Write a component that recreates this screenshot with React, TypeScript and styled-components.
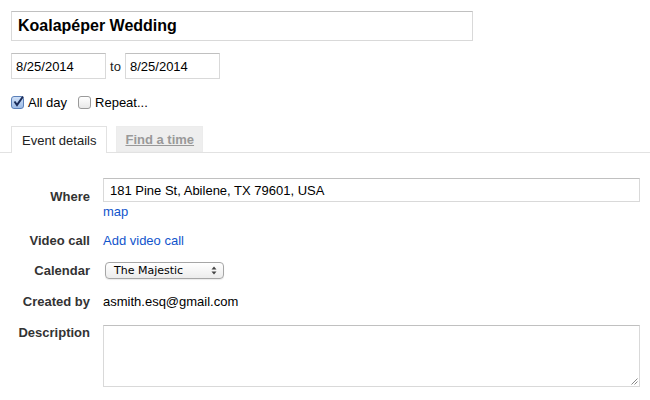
import React from "react";
import styled, { createGlobalStyle } from "styled-components";

const Global = createGlobalStyle`
  html, body { margin: 0; padding: 0; background: #fff; }
  body { font-family: "Liberation Sans", Arial, sans-serif; font-size: 13px; color: #222; }
  * { box-sizing: border-box; }
`;

const Page = styled.div`
  width: 650px;
  height: 400px;
  overflow: hidden;
  padding-top: 11px;
`;

const Top = styled.div`
  padding-left: 11px;
  display: flex;
  flex-direction: column;
`;

const TitleInput = styled.input`
  width: 462px;
  height: 30px;
  border: 1px solid #d9d9d9;
  border-top-color: #c0c0c0;
  padding: 0 6px;
  font-family: "Liberation Sans", Arial, sans-serif;
  font-size: 16px;
  font-weight: bold;
  color: #000;
  outline: none;
`;

const DateRow = styled.div`
  display: flex;
  align-items: center;
  gap: 4px;
  margin-top: 12px;
`;

const DateInput = styled.input`
  width: 95px;
  height: 26px;
  border: 1px solid #d9d9d9;
  border-top-color: #c0c0c0;
  padding: 0 4px;
  font-family: "Liberation Sans", Arial, sans-serif;
  font-size: 13px;
  color: #000;
  outline: none;
`;

const ToText = styled.span`
  color: #222;
  width: 11px;
  text-align: center;
`;

const CheckRow = styled.div`
  display: flex;
  align-items: center;
  margin-top: 15px;
  height: 17px;
`;

const CheckLabel = styled.label`
  display: flex;
  align-items: center;
  margin-right: 11px;
  color: #000;
`;

const Box = styled.span<{ checked?: boolean }>`
  width: 13px;
  height: 13px;
  border: 1px solid ${(p) => (p.checked ? "#5a7fb8" : "#9a9a9a")};
  border-radius: 3px;
  background: ${(p) =>
    p.checked ? "linear-gradient(#cfe0f7, #9dbbe6)" : "linear-gradient(#fff, #e8e8e8)"};
  margin-right: 4px;
  position: relative;
  display: inline-block;
`;

const Tabs = styled.div`
  display: flex;
  align-items: flex-end;
  margin-top: 15px;
  padding-left: 11px;
  border-bottom: 1px solid #e2e2e2;
  height: 27px;
`;

const Tab = styled.div<{ active?: boolean }>`
  height: ${(p) => (p.active ? "27px" : "26px")};
  margin-bottom: ${(p) => (p.active ? "-1px" : "0")};
  padding: ${(p) => (p.active ? "1px 10px 0" : "0 8px")};
  display: flex;
  align-items: center;
  margin-right: 9px;
  border: 1px solid ${(p) => (p.active ? "#e2e2e2" : "#ececec")};
  border-bottom: ${(p) => (p.active ? "none" : "1px solid #ececec")};
  background: ${(p) => (p.active ? "#fff" : "#eeeeee")};
  color: ${(p) => (p.active ? "#222" : "#999")};
  font-weight: ${(p) => (p.active ? "normal" : "bold")};
  text-decoration: ${(p) => (p.active ? "none" : "underline")};
`;

const Form = styled.div`
  display: grid;
  grid-template-columns: 90px 537px;
  column-gap: 13px;
  margin-top: 25px;
`;

const Label = styled.div<{ top?: number }>`
  text-align: right;
  font-weight: bold;
  color: #333;
  padding-top: ${(p) => p.top ?? 0}px;
`;

const Field = styled.div<{ gap?: number }>`
  display: flex;
  flex-direction: column;
  align-items: flex-start;
  margin-bottom: ${(p) => p.gap ?? 0}px;
`;

const WhereInput = styled.input`
  width: 537px;
  height: 24px;
  border: 1px solid #d9d9d9;
  border-top-color: #c0c0c0;
  padding: 0 6px;
  font-family: "Liberation Sans", Arial, sans-serif;
  font-size: 13px;
  color: #000;
  outline: none;
`;

const Link = styled.a`
  color: #1155cc;
  text-decoration: none;
  cursor: pointer;
`;

const MapLink = styled(Link)`
  margin-top: 2px;
`;

const Select = styled.div`
  margin-left: 2px;
  width: 119px;
  height: 17px;
  border: 1px solid #a6a6a6;
  border-radius: 4px;
  background: linear-gradient(#ffffff, #ececec);
  display: flex;
  align-items: center;
  justify-content: space-between;
  padding: 0 6px 0 8px;
  font-family: "Lucida Grande", "DejaVu Sans", sans-serif;
  font-size: 11px;
  color: #000;
  box-shadow: 0 1px 1px rgba(0, 0, 0, 0.08);
`;

const Plain = styled.div`
  color: #000;
`;

const TextArea = styled.div`
  width: 537px;
  height: 62px;
  margin-top: 1px;
  border: 1px solid #d9d9d9;
  border-top-color: #c0c0c0;
  position: relative;
`;

const Grip = styled.svg`
  position: absolute;
  right: 1px;
  bottom: 1px;
`;

export default function App() {
  return (
    <Page>
      <Global />
      <Top>
        <TitleInput defaultValue="Koalapéper Wedding" />
        <DateRow>
          <DateInput defaultValue="8/25/2014" />
          <ToText>to</ToText>
          <DateInput defaultValue="8/25/2014" />
        </DateRow>
        <CheckRow>
          <CheckLabel>
            <Box checked>
              <svg width="13" height="13" viewBox="0 0 13 13" style={{ position: "absolute", left: 0, top: -2 }}>
                <path d="M2.5 6.5 L5 10 L11 1.5" fill="none" stroke="#1a2c5a" strokeWidth="2" />
              </svg>
            </Box>
            All day
          </CheckLabel>
          <CheckLabel>
            <Box />
            Repeat...
          </CheckLabel>
        </CheckRow>
      </Top>
      <Tabs>
        <Tab active>Event details</Tab>
        <Tab>Find a time</Tab>
      </Tabs>
      <Form>
        <Label top={11}>Where</Label>
        <Field gap={14}>
          <WhereInput defaultValue="181 Pine St, Abilene, TX 79601, USA" />
          <MapLink>map</MapLink>
        </Field>
        <Label>Video call</Label>
        <Field gap={14}>
          <Link>Add video call</Link>
        </Field>
        <Label top={1}>Calendar</Label>
        <Field gap={15}>
          <Select>
            <span>The Majestic</span>
            <svg width="6" height="9" viewBox="0 0 6 9">
              <path d="M0.5 3.5 L3 0.5 L5.5 3.5 Z M0.5 5.5 L3 8.5 L5.5 5.5 Z" fill="#444" />
            </svg>
          </Select>
        </Field>
        <Label>Created by</Label>
        <Field gap={15}>
          <Plain>asmith.esq@gmail.com</Plain>
        </Field>
        <Label top={1}>Description</Label>
        <Field>
          <TextArea>
            <Grip width="7" height="7" viewBox="0 0 7 7">
              <path d="M6.5 0.5 L0.5 6.5 M6.5 3.5 L3.5 6.5" stroke="#888" strokeWidth="1" />
            </Grip>
          </TextArea>
        </Field>
      </Form>
    </Page>
  );
}
